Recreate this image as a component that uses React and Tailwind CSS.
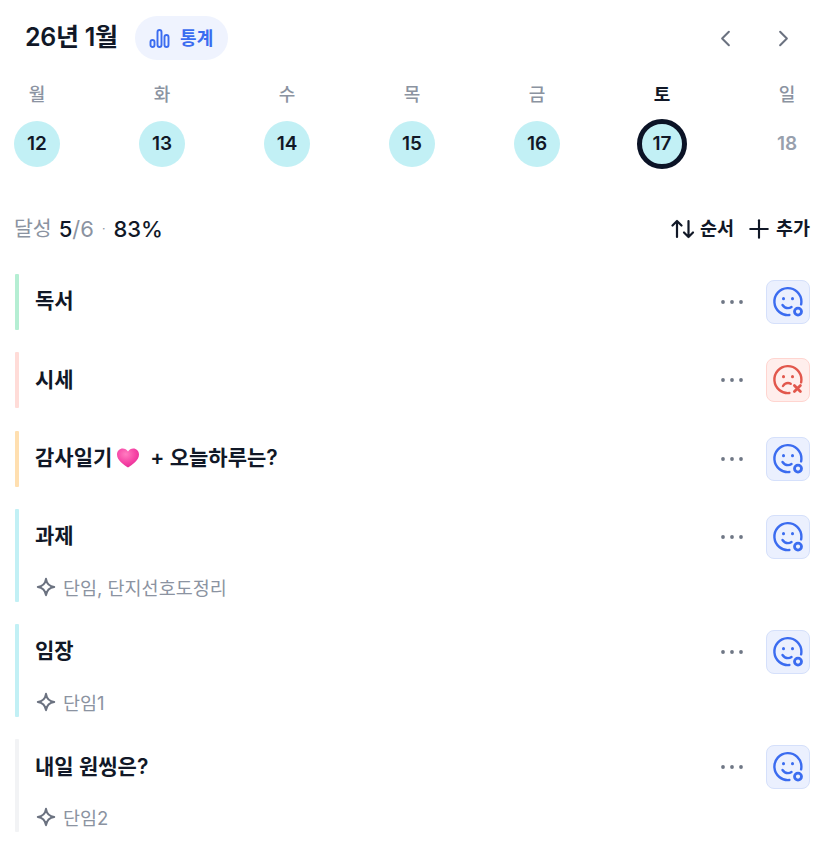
import { ChevronLeft, ChevronRight, Plus } from 'lucide-react';

const days = [
  { label: '월', date: 12, done: true },
  { label: '화', date: 13, done: true },
  { label: '수', date: 14, done: true },
  { label: '목', date: 15, done: true },
  { label: '금', date: 16, done: true },
  { label: '토', date: 17, done: true, today: true },
  { label: '일', date: 18 },
];

const habits = [
  { title: '독서', bar: 'bg-[#b5eed3]' },
  { title: '시세', bar: 'bg-[#ffdcd8]', failed: true },
  { title: '감사일기', bar: 'bg-[#ffdfb0]', heart: true, suffix: '+ 오늘하루는?' },
  { title: '과제', bar: 'bg-[#c2f0f5]', note: '단임, 단지선호도정리' },
  { title: '임장', bar: 'bg-[#c2f0f5]', note: '단임1' },
  { title: '내일 원씽은?', bar: 'bg-[#f2f3f5]', note: '단임2' },
];

function StatsIcon() {
  return (
    <svg width="21" height="21" viewBox="0 0 21 21" fill="none" stroke="#3b6cf0" strokeWidth="1.9">
      <rect x="1.5" y="12" width="4" height="7" rx="2" />
      <rect x="8.5" y="2" width="4" height="17" rx="2" />
      <rect x="15.500" y="7" width="4" height="12" rx="2" />
    </svg>
  );
}

function SortIcon() {
  return (
    <svg width="24" height="20" viewBox="0 0 24 20" fill="none" stroke="#111827" strokeWidth="2.2" strokeLinecap="round" strokeLinejoin="round">
      <path d="M6 18V2M1.500 6.500 6 2l4.500 4.500" />
      <path d="M17.500 2v16M13 13.500l4.500 4.500 4.500-4.500" />
    </svg>
  );
}

function DotsIcon() {
  return (
    <svg width="26" height="6" viewBox="0 0 26 6" fill="#6f7785">
      <circle cx="4" cy="3" r="1.900" />
      <circle cx="13" cy="3" r="1.900" />
      <circle cx="22" cy="3" r="1.900" />
    </svg>
  );
}

function Face({ failed }) {
  const color = failed ? '#e2574c' : '#3b6cf0';
  return (
    <svg width="32" height="32" viewBox="0 0 32 32" fill="none" stroke={color} strokeWidth="2.4" strokeLinecap="round" strokeLinejoin="round">
      <path d="M17.400 29A13.500 13.500 0 1 1 29.400 15.500c0 1-.1 2-.3 2.900" />
      {failed ? (
        <>
          <path d="M11 22c1.200-2 3-3 5-3 1 0 1.900.3 2.700.8" />
          <path d="m22.400 21.600 6 6M28.400 21.600l-6 6" strokeWidth="2.800" />
        </>
      ) : (
        <>
          <path d="M10.500 19c1.300 2 3.300 3.100 5.500 3.100 1.300 0 2.500-.4 3.500-1.100" />
          <circle cx="26" cy="25.600" r="3.500" strokeWidth="2.800" />
        </>
      )}
      <path d="M11.500 12.600v.2M20.500 12.600v.2" strokeWidth="3" />
    </svg>
  );
}

function Heart() {
  return (
    <svg width="24" height="22" viewBox="0 0 24 22" className="shrink-0">
      <defs>
        <radialGradient id="heart" cx="40%" cy="30%" r="75%">
          <stop offset="0%" stopColor="#ff7cc0" />
          <stop offset="60%" stopColor="#f643a5" />
          <stop offset="100%" stopColor="#e32a94" />
        </radialGradient>
      </defs>
      <path d="M12 20.500C8 18 1 13.500 1 7.500 1 3.900 3.700 1.500 6.700 1.500c2.200 0 4.100 1.100 5.300 3 1.200-1.900 3.100-3 5.300-3 3 0 5.700 2.400 5.700 6 0 6-7 10.500-11 13Z" fill="url(#heart)" />
    </svg>
  );
}

function Sparkle() {
  return (
    <svg width="20" height="20" viewBox="0 0 20 20" fill="none" stroke="#6b7280" strokeWidth="2" strokeLinejoin="round" className="shrink-0">
      <path d="M10 1.800c.7 4.700 3.500 7.500 8.200 8.200-4.700.7-7.500 3.500-8.200 8.200-.7-4.700-3.500-7.500-8.200-8.200 4.700-.7 7.500-3.500 8.200-8.200Z" />
    </svg>
  );
}

function DayColumn({ day }) {
  return (
    <div className="flex w-[46px] flex-col items-center">
      <span className={`text-[18px] leading-[26px] ${day.today ? 'font-semibold text-[#111827]' : 'font-medium text-[#8b93a1]'}`}>
        {day.label}
      </span>
      <div className="mt-[11px] flex h-[50px] w-[50px] items-center justify-center">
        {day.today ? (
          <div className="flex h-[50px] w-[50px] shrink-0 items-center justify-center rounded-full border-[5px] border-[#0b1326] bg-[#c2f0f5] text-[19px] font-semibold text-[#111827]">
            {day.date}
          </div>
        ) : (
          <div className={`flex h-[46px] w-[46px] items-center justify-center rounded-full text-[19px] font-semibold ${day.done ? 'bg-[#c2f0f5] text-[#111827]' : 'text-[#98a0ad]'}`}>
            {day.date}
          </div>
        )}
      </div>
    </div>
  );
}

function HabitRow({ habit }) {
  return (
    <div className="flex">
      <div className={`w-[4px] shrink-0 rounded-[1px] ${habit.bar}`} />
      <div className="flex-1 pl-[16px]">
        <div className="flex h-[56px] items-center justify-between">
          <div className="flex items-center pb-[2px] text-[21px] font-semibold text-[#111827]">
            {habit.title}
            {habit.heart && <span className="ml-[4px] mr-[10px]"><Heart /></span>}
            {habit.suffix}
          </div>
          <div className="flex items-center gap-[21px]">
            <DotsIcon />
            <button className={`flex h-[44px] w-[44px] items-center justify-center rounded-lg border ${habit.failed ? 'border-[#ffd5d0] bg-[#ffeeec]' : 'border-[#d5e0fb] bg-[#ebf0fe]'}`}>
              <Face failed={habit.failed} />
            </button>
          </div>
        </div>
        {habit.note && (
          <div className="flex h-[37px] items-start gap-[7px] pl-[1px] pt-[12px] text-[18.5px] leading-[24px] text-[#8b93a1]">
            <Sparkle />
            <span className="-mt-[1px]">{habit.note}</span>
          </div>
        )}
      </div>
    </div>
  );
}

export default function App() {
  return (
    <div className="h-[852px] overflow-hidden bg-white pl-[15px] pr-[17px] pt-[16px] font-['Inter','Noto_Sans_CJK_KR',sans-serif]">
      {/* Header */}
      <div className="flex h-[44px] items-center justify-between">
        <div className="flex items-center gap-[17px] pl-[10px]">
          <h1 className="text-[25px] font-semibold tracking-[-0.3px] text-[#111827]">26년 1월</h1>
          <button className="flex h-[44px] w-[93px] items-center justify-center gap-[10px] rounded-full bg-[#eff3fe] text-[18px] font-semibold text-[#3b6cf0]">
            <StatsIcon />
            통계
          </button>
        </div>
        <div className="flex items-center gap-[31px] pr-[13px]">
          <ChevronLeft className="h-[27px] w-[27px] text-[#6b7280]" strokeWidth={1.8} />
          <ChevronRight className="h-[27px] w-[27px] text-[#6b7280]" strokeWidth={1.8} />
        </div>
      </div>

      {/* Week */}
      <div className="-ml-[1px] mt-[22px] flex justify-between">
        {days.map((day) => (
          <DayColumn key={day.date} day={day} />
        ))}
      </div>

      {/* Summary */}
      <div className="-ml-[1px] mt-[46px] flex h-[28px] items-center justify-between">
        <div className="flex items-center text-[22px] text-[#8b93a1]">
          <span className="text-[20.5px]">달성</span>
          <span className="ml-[7px] font-medium text-[#111827]">5</span>
          <span>/6</span>
          <span className="mx-[8px] text-[12px]">·</span>
          <span className="font-medium text-[#111827]">83%</span>
        </div>
        <div className="flex items-center text-[18.5px] font-semibold text-[#111827]">
          <SortIcon />
          <span className="ml-[5px]">순서</span>
          <Plus className="ml-[10px] h-[30px] w-[30px]" strokeWidth={1.7} />
          <span className="ml-[2px]">추가</span>
        </div>
      </div>

      {/* Habits */}
      <div className="mt-[31px] flex flex-col gap-[22.3px]">
        {habits.map((habit) => (
          <HabitRow key={habit.title} habit={habit} />
        ))}
      </div>
    </div>
  );
}
